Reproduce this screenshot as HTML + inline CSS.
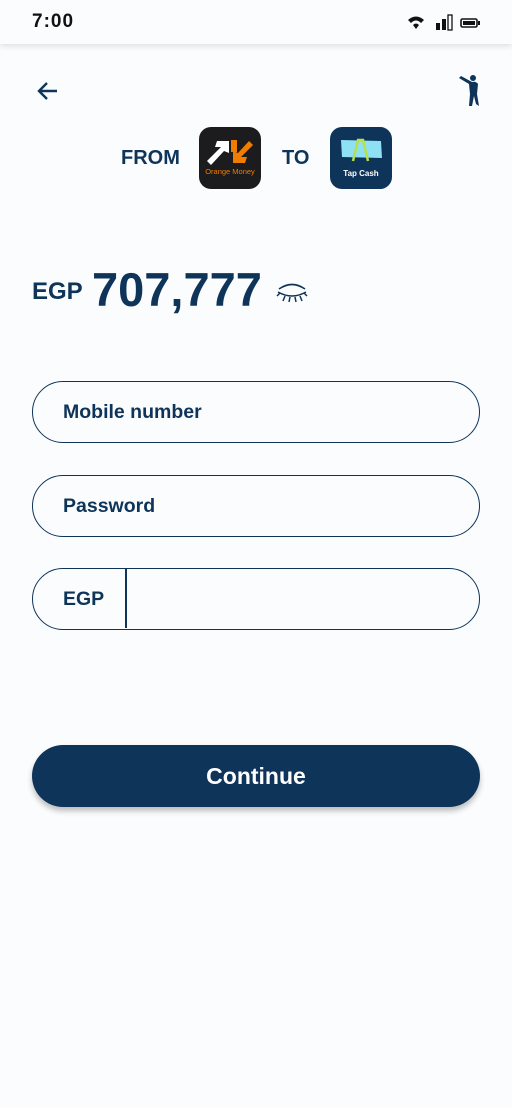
<!DOCTYPE html>
<html><head><meta charset="utf-8"><style>
*{margin:0;padding:0;box-sizing:border-box}
body{width:512px;height:1108px;background:#fbfcfe;font-family:"Liberation Sans",sans-serif;position:relative;overflow:hidden;color:#0e3459}
.status{position:absolute;left:0;top:0;width:512px;height:44px;background:#fbfcfe;box-shadow:0 2px 6px rgba(0,0,0,0.12)}
.time{position:absolute;left:32px;top:11px;font-size:19px;font-weight:bold;color:#111;letter-spacing:1px}
.abs{position:absolute}
.field{position:absolute;left:32px;width:448px;height:62px;border:1.5px solid #0e3459;border-radius:31px;font-size:19.5px;font-weight:bold}
.field span{position:absolute;left:30px;top:19px}
.btn{position:absolute;left:32px;top:745px;width:448px;height:62px;border-radius:31px;background:#0e3459;color:#fff;font-size:23px;font-weight:bold;text-align:center;line-height:62px;box-shadow:0 4px 6px rgba(0,0,0,0.25)}
</style></head><body>
<div class="status"><div class="time">7:00</div>
<svg class="abs" style="left:406px;top:14px" width="76" height="18" viewBox="0 0 76 18">
<path d="M2 6 Q10 -1 18 6 L15 9 Q10 4 5 9Z M7 11 Q10 8 13 11 L10 15Z" fill="#111"/>
<rect x="30" y="9" width="4" height="7" fill="#111"/><rect x="36" y="5" width="4" height="11" fill="#111"/><rect x="42" y="1" width="4" height="15" fill="none" stroke="#111" stroke-width="1.3"/>
<rect x="55" y="5" width="16" height="8" rx="1.5" fill="none" stroke="#111" stroke-width="1.6"/><rect x="57" y="7" width="12" height="4" fill="#111"/><rect x="72" y="7" width="2" height="4" fill="#111"/>
</svg></div>
<svg class="abs" style="left:36px;top:80px" width="24" height="22" viewBox="0 0 24 22"><path d="M21 11H3M11 3L3 11L11 19" stroke="#0e3459" stroke-width="2.4" fill="none"/></svg>
<svg class="abs" style="left:456px;top:74px" width="28" height="34" viewBox="0 0 28 34"><circle cx="17" cy="4" r="3" fill="#0e3459"/><path d="M3 4 L13 10 L14 20 L13 32 L16 32 L18 22 L20 30 L23 32 L21 20 L22 10 Q20 7 16 8 L5 2Z" fill="#0e3459"/></svg>
<div class="abs" style="left:121px;top:147px;font-size:20px;font-weight:bold">FROM</div>
<div class="abs" style="left:199px;top:127px;width:62px;height:62px;border-radius:12px;background:#1c1c1e">
<svg width="62" height="62" viewBox="0 0 62 62"><path d="M8 34 L22 20 L16 20 L18 14 L30 14 L30 26 L25 24 L12 38Z" fill="#fff"/><path d="M50 14 L54 18 L42 30 L48 30 L46 36 L34 36 L34 24 L39 26Z" fill="#f07d00"/><rect x="32" y="13" width="6" height="12" fill="#f07d00"/><text x="31" y="47" font-size="7.5" fill="#f07d00" text-anchor="middle" font-family="Liberation Sans">Orange Money</text></svg></div>
<div class="abs" style="left:282px;top:147px;font-size:20px;font-weight:bold">TO</div>
<div class="abs" style="left:330px;top:127px;width:62px;height:62px;border-radius:12px;background:#0e3459">
<svg width="62" height="62" viewBox="0 0 62 62"><path d="M11 13 L51 14 L52 31 L12 30Z" fill="#8ee0f3"/><path d="M23 34 L28 13 L33 13 L38 34" stroke="#b7e04a" stroke-width="2.5" fill="none"/><text x="31" y="49" font-size="8" fill="#fff" font-weight="bold" text-anchor="middle" font-family="Liberation Sans">Tap Cash</text></svg></div>
<div class="abs" style="left:32px;top:278px;font-size:24px;font-weight:bold">EGP</div>
<div class="abs" style="left:92px;top:262px;font-size:47px;font-weight:bold">707,777</div>
<svg class="abs" style="left:275px;top:280px" width="34" height="24" viewBox="0 0 34 24"><path d="M4 9 Q17 0 30 9" stroke="#0e3459" stroke-width="1.6" fill="none"/><path d="M3 12 Q17 20 31 12M5 13 L2 16M10 16 L8 21M15 17 L14 22M20 17 L21 22M25 16 L27 21M29 13 L32 16" stroke="#0e3459" stroke-width="1.5" fill="none"/></svg>
<div class="field" style="top:381px"><span>Mobile number</span></div>
<div class="field" style="top:475px"><span>Password</span></div>
<div class="field" style="top:568px"><span>EGP</span><div class="abs" style="left:92px;top:0;width:1.5px;height:59px;background:#0e3459"></div></div>
<div class="btn">Continue</div>
</body></html>
